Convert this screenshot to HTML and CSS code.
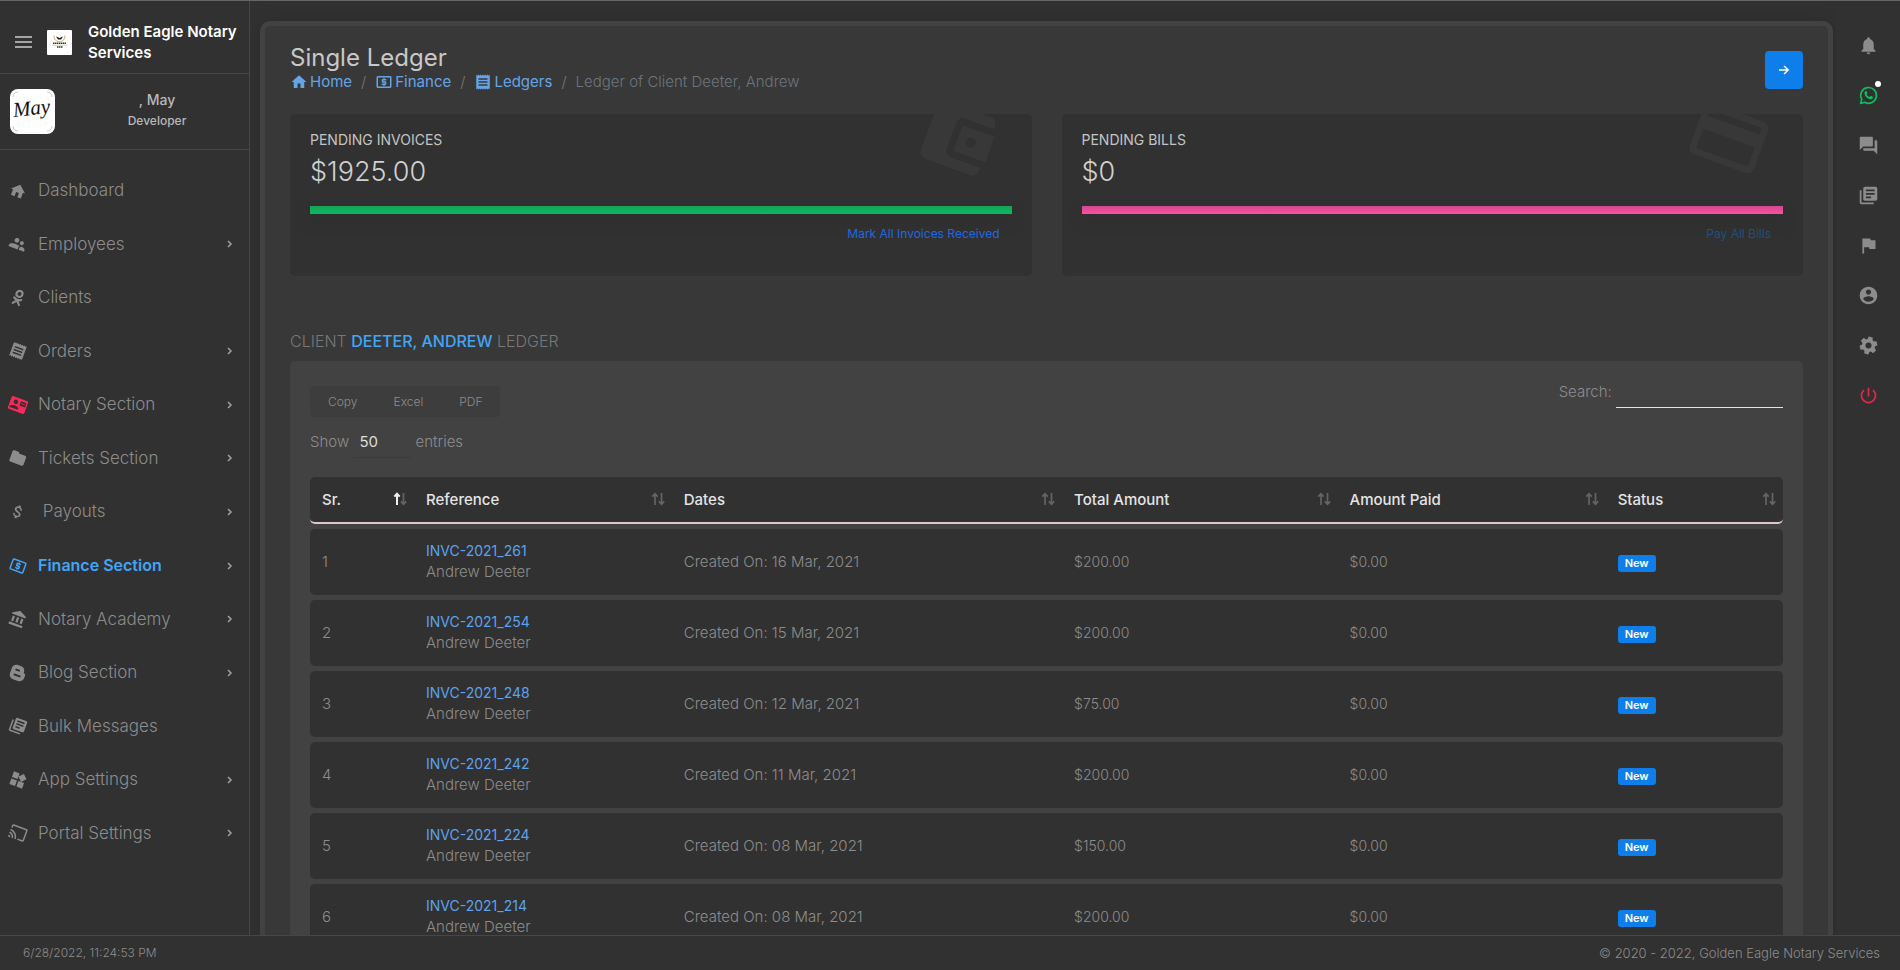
FILE: index.html
```html
<!DOCTYPE html>
<html lang="en">
<head>
<meta charset="utf-8">
<title>Single Ledger</title>
<meta name="viewport" content="width=device-width, initial-scale=1">
<link rel="stylesheet" href="styles.css">
</head>
<body>
<svg class="sprite" aria-hidden="true">
  <symbol id="i-home" viewBox="0 0 24 24"><path d="M10 20v-6h4v6h5v-8h3L12 3 2 12h3v8z"/></symbol>
  <symbol id="i-people" viewBox="0 0 24 24"><path d="M16.500 12c1.380 0 2.700-1.120 2.700-2.800S17.880 6.500 16.500 6.500C15.120 6.500 13.800 7.700 13.800 9.200s1.320 2.800 2.700 2.800zM9 11c1.660 0 3.200-1.340 3.200-3.200S10.660 4.600 9 4.600C7.340 4.600 5.800 6 5.800 7.800S7.340 11 9 11zM9 13c-2.500 0-8 1.170-8 3.800V19h13v-2.250c0-1 .2-2 1-3-2-.6-4-.75-6-.75zm8.500 1c-1.300.6-2 1.600-2 2.750V19H23v-2.250c0-1.800-3-2.750-5.500-2.750z"/></symbol>
  <symbol id="i-client" viewBox="0 0 24 24"><g fill="none" stroke="currentColor" stroke-width="2.800" stroke-linecap="round"><circle cx="12" cy="6.200" r="4"/><path d="M7 13c3 2.300 7 2.300 10 0M12 15.500l-4.500 5M12 15.500l4.500 5"/></g></symbol>
  <symbol id="i-receipt" viewBox="0 0 24 24"><path d="M18 17H6v-2h12v2zm0-4H6v-2h12v2zm0-4H6V7h12v2zM3 22l1.5-1.5L6 22l1.5-1.5L9 22l1.5-1.5L12 22l1.5-1.5L15 22l1.5-1.5L18 22l1.5-1.5L21 22V2l-1.5 1.5L18 2l-1.5 1.5L15 2l-1.5 1.5L12 2l-1.5 1.5L9 2 7.5 3.5 6 2 4.5 3.5 3 2v20z"/></symbol>
  <symbol id="i-contact" viewBox="0 0 24 24"><path d="M21 8V7l-3 2-3-2v1l3 2 3-2zm1-5H2C.9 3 0 3.9 0 5v14c0 1.1.9 2 2 2h20c1.1 0 1.99-.9 1.99-2L24 5c0-1.1-.9-2-2-2zM8 6c1.66 0 3 1.34 3 3s-1.34 3-3 3-3-1.34-3-3 1.34-3 3-3zm6 12H2v-1c0-2 4-3.1 6-3.1s6 1.1 6 3.1v1zm8-6h-8V6h8v6z"/></symbol>
  <symbol id="i-folder" viewBox="0 0 24 24"><path d="M10 4H4c-1.1 0-1.99.9-1.99 2L2 18c0 1.1.9 2 2 2h16c1.1 0 2-.9 2-2V8c0-1.1-.9-2-2-2h-8l-2-2z"/></symbol>
  <symbol id="i-money" viewBox="0 0 24 24"><path d="M11.8 10.9c-2.27-.59-3-1.2-3-2.15 0-1.09 1.01-1.85 2.7-1.85 1.78 0 2.44.85 2.5 2.1h2.21c-.07-1.72-1.12-3.3-3.21-3.81V3h-3v2.16c-1.94.42-3.5 1.68-3.5 3.61 0 2.31 1.91 3.46 4.7 4.13 2.5.6 3 1.48 3 2.41 0 .69-.49 1.79-2.7 1.79-2.06 0-2.87-.92-2.98-2.1h-2.2c.12 2.19 1.76 3.42 3.68 3.83V21h3v-2.15c1.95-.37 3.5-1.5 3.5-3.55 0-2.84-2.43-3.81-4.7-4.4z"/></symbol>
  <symbol id="i-atm" viewBox="0 0 24 24"><path d="M11 17h2v-1h1c.55 0 1-.45 1-1v-3c0-.55-.45-1-1-1h-3v-1h4V8h-2V7h-2v1h-1c-.55 0-1 .45-1 1v3c0 .55.45 1 1 1h3v1H9v2h2v1zm9-13H4c-1.11 0-1.99.89-1.99 2L2 18c0 1.11.89 2 2 2h16c1.11 0 2-.89 2-2V6c0-1.11-.89-2-2-2zm0 14H4V6h16v12z"/></symbol>
  <symbol id="i-bank" viewBox="0 0 24 24"><path d="M4 10v7h3v-7H4zm6 0v7h3v-7h-3zM2 22h19v-3H2v3zm14-12v7h3v-7h-3zm-4.500-9L2 6v2h19V6l-9.500-5z"/></symbol>
  <symbol id="i-blog" viewBox="0 0 24 24"><path fill-rule="evenodd" d="M8.500 2H13c3.600 0 6 2.600 6 6 0 1.300.4 1.900 1.500 2 1 .1 1.500.6 1.500 1.500V15c0 4-2.800 7-6.500 7h-7C4.800 22 2 19 2 15.500v-7C2 4.800 4.800 2 8.500 2zM8.300 7.200a1.300 1.300 0 0 0 0 2.600h4a1.300 1.300 0 0 0 0-2.600zM8.300 14.200a1.300 1.300 0 0 0 0 2.600h7.400a1.300 1.300 0 0 0 0-2.600z"/></symbol>
  <symbol id="i-books" viewBox="0 0 24 24"><path d="M4 6H2v14c0 1.100.9 2 2 2h14v-2H4V6zm16-4H8c-1.100 0-2 .9-2 2v12c0 1.100.9 2 2 2h12c1.100 0 2-.9 2-2V4c0-1.100-.9-2-2-2zm-1 9H9V9h10v2zm-4 4H9v-2h6v2zm4-8H9V5h10v2z"/></symbol>
  <symbol id="i-widgets" viewBox="0 0 24 24"><path d="M13 13v8h8v-8h-8zM3 21h8v-8H3v8zM3 3v8h8V3H3zm13.660-1.310L11 7.340 16.660 13l5.660-5.660-5.660-5.650z"/></symbol>
  <symbol id="i-cast" viewBox="0 0 24 24"><path d="M21 3H3c-1.100 0-2 .9-2 2v3h2V5h18v14h-7v2h7c1.100 0 2-.9 2-2V5c0-1.100-.9-2-2-2zM1 18v3h3c0-1.660-1.340-3-3-3zm0-4v2c2.760 0 5 2.240 5 5h2c0-3.870-3.130-7-7-7zm0-4v2c4.970 0 9 4.030 9 9h2c0-6.080-4.930-11-11-11z"/></symbol>
  <symbol id="i-bell" viewBox="0 0 24 24"><path d="M12 22c1.100 0 2-.9 2-2h-4c0 1.100.89 2 2 2zm6-6v-5c0-3.070-1.640-5.640-4.500-6.320V4c0-.83-.67-1.500-1.500-1.500s-1.500.67-1.500 1.500v.68C7.630 5.360 6 7.920 6 11v5l-2 2v1h16v-1l-2-2z"/></symbol>
  <symbol id="i-whatsapp" viewBox="0 0 24 24"><path fill="none" stroke="currentColor" stroke-width="1.900" stroke-linejoin="round" d="M3 21l1.300-4.700A9 9 0 1 1 7.700 19.700z"/><path d="M8.800 6.900c.3-.2.9-.2 1.100.2l.8 1.900c.1.300 0 .6-.2.800l-.7.8c.8 1.500 1.900 2.500 3.500 3.200l.9-1.100c.2-.2.500-.3.800-.2l1.800.9c.3.1.4.4.3.800-.2 1.300-1.300 2.100-2.500 2.100-3.600-.2-7.200-3.900-7.200-6.900 0-1.100.6-2 1.400-2.500z"/></symbol>
  <symbol id="i-chat" viewBox="0 0 24 24"><path d="M21 6h-2v9H6v2c0 .55.45 1 1 1h11l4 4V7c0-.55-.45-1-1-1zm-4 6V3c0-.55-.45-1-1-1H3c-.55 0-1 .45-1 1v14l4-4h10c.55 0 1-.45 1-1z"/></symbol>
  <symbol id="i-flag" viewBox="0 0 24 24"><path d="M14.400 6L14 4H5v17h2v-7h5.600l.4 2h7V6z"/></symbol>
  <symbol id="i-account" viewBox="0 0 24 24"><path d="M12 2C6.480 2 2 6.480 2 12s4.480 10 10 10 10-4.480 10-10S17.520 2 12 2zm0 3c1.660 0 3 1.340 3 3s-1.340 3-3 3-3-1.340-3-3 1.340-3 3-3zm0 14.200c-2.500 0-4.710-1.280-6-3.220.03-1.990 4-3.080 6-3.080 1.990 0 5.970 1.090 6 3.080-1.290 1.940-3.500 3.220-6 3.220z"/></symbol>
  <symbol id="i-gear" viewBox="0 0 24 24"><path transform="rotate(15 12 12)" d="M19.430 12.980c.04-.32.07-.64.07-.98s-.03-.66-.07-.98l2.110-1.650c.19-.15.24-.42.12-.64l-2-3.460c-.12-.22-.39-.3-.61-.22l-2.490 1c-.52-.4-1.080-.73-1.690-.98l-.38-2.650C14.460 2.180 14.250 2 14 2h-4c-.25 0-.46.18-.49.42l-.38 2.650c-.61.25-1.170.59-1.690.98l-2.490-1c-.23-.09-.49 0-.61.22l-2 3.460c-.13.22-.07.49.12.64l2.110 1.650c-.04.32-.07.65-.07.98s.03.66.07.98l-2.110 1.650c-.19.15-.24.42-.12.64l2 3.460c.12.22.39.3.61.22l2.490-1c.52.4 1.080.73 1.690.98l.38 2.650c.03.24.24.42.49.42h4c.25 0 .46-.18.49-.42l.38-2.650c.61-.25 1.170-.59 1.690-.98l2.490 1c.23.09.49 0 .61-.22l2-3.460c.12-.22.07-.49-.12-.64l-2.110-1.650zM12 15.500c-1.930 0-3.500-1.570-3.500-3.500s1.570-3.500 3.500-3.500 3.500 1.570 3.500 3.500-1.570 3.500-3.500 3.500z"/></symbol>
  <symbol id="i-power" viewBox="0 0 24 24"><path d="M13 3h-2v10h2V3zm4.830 2.170l-1.420 1.420C17.990 7.860 19 9.810 19 12c0 3.870-3.130 7-7 7s-7-3.130-7-7c0-2.190 1.010-4.140 2.580-5.420L6.170 5.170C4.230 6.820 3 9.260 3 12c0 4.970 4.030 9 9 9s9-4.030 9-9c0-2.740-1.230-5.180-3.170-6.830z"/></symbol>
  <symbol id="i-wallet" viewBox="0 0 24 24"><path d="M21 18v1c0 1.100-.9 2-2 2H5c-1.110 0-2-.9-2-2V5c0-1.100.89-2 2-2h14c1.100 0 2 .9 2 2v1h-9c-1.110 0-2 .9-2 2v8c0 1.100.89 2 2 2h9zm-9-2h10V8H12v8zm4-2.500c-.83 0-1.500-.67-1.500-1.500s.67-1.500 1.500-1.500 1.500.67 1.500 1.500-.67 1.500-1.500 1.500z"/></symbol>
  <symbol id="i-card" viewBox="0 0 24 24"><path d="M20 4H4c-1.110 0-1.990.89-1.990 2L2 18c0 1.110.89 2 2 2h16c1.110 0 2-.89 2-2V6c0-1.110-.89-2-2-2zm0 14H4v-6h16v6zm0-10H4V6h16v2z"/></symbol>
  <symbol id="i-chevron" viewBox="0 0 8 10"><path fill="none" stroke="currentColor" stroke-width="1.500" d="M2 2l3 3-3 3"/></symbol>
  <symbol id="i-arrow" viewBox="0 0 12 12"><path fill="none" stroke="currentColor" stroke-width="1.500" d="M1 6h9M6 2l4.200 4L6 10"/></symbol>
  <symbol id="i-sort" viewBox="0 0 14 14"><g fill="none" stroke="currentColor" stroke-width="1.700"><path d="M4 13V2M1.300 4.600L4 1.800l2.700 2.800M10.500 1v11M7.800 9.400l2.700 2.800 2.700-2.800"/></g></symbol>
  <symbol id="i-sort-asc" viewBox="0 0 14 14"><g fill="none" stroke="currentColor" stroke-width="1.700"><path stroke="#f0f0f0" stroke-width="2" d="M4 13V2M1.300 4.600L4 1.800l2.700 2.800"/><path d="M10.500 1v11M7.800 9.400l2.700 2.800 2.700-2.800"/></g></symbol>
</svg>

<div class="app">
  <aside class="sidebar">
    <div class="brand">
      <button class="menu-toggle" type="button" aria-label="Toggle menu"><span></span><span></span><span></span></button>
      <svg class="brand-logo" viewBox="0 0 25 25" aria-hidden="true">
        <rect width="25" height="25" rx="1" fill="#fff"/>
        <path d="M7 5.500c0 4 2 6 5.500 6s5.500-2 5.500-6" fill="none" stroke="#c9ad6a" stroke-width="1"/>
        <path d="M9 6.500l2.500 1 1 .8 1-.8 2.500-1-2 3h-3z" fill="#161616"/>
        <path d="M6 13.200h13M10 17h5.500" stroke="#333" stroke-width="1.600" stroke-dasharray="1.500 .5"/>
        <path d="M5 15.200h15" stroke="#c9ad6a" stroke-width=".6"/>
      </svg>
      <a class="brand-name" href="#">Golden Eagle Notary Services</a>
    </div>
    <div class="profile">
      <svg class="avatar" viewBox="0 0 45 45" role="img" aria-label="May">
        <rect width="45" height="45" rx="8" fill="#fff"/>
        <path d="M3 8c0-3 2-5 5-5M37 3c3 0 5 2 5 5M3 37c0 3 2 5 5 5M37 42c3 0 5-2 5-5" fill="none" stroke="#aaa" stroke-width=".6"/>
        <text class="avatar-text" x="22" y="26" text-anchor="middle" transform="rotate(-6 22 24)">May</text>
      </svg>
      <div class="profile-info">
        <div class="profile-name">, May</div>
        <div class="profile-role">Developer</div>
      </div>
    </div>
    <nav class="nav">
      <a href="#"><svg class="nav-icon"><use href="#i-home"/></svg><span>Dashboard</span></a>
      <a href="#"><svg class="nav-icon"><use href="#i-people"/></svg><span>Employees</span><svg class="chev"><use href="#i-chevron"/></svg></a>
      <a href="#"><svg class="nav-icon"><use href="#i-client"/></svg><span>Clients</span></a>
      <a href="#"><svg class="nav-icon"><use href="#i-receipt"/></svg><span>Orders</span><svg class="chev"><use href="#i-chevron"/></svg></a>
      <a href="#"><svg class="nav-icon red"><use href="#i-contact"/></svg><span>Notary Section</span><svg class="chev"><use href="#i-chevron"/></svg></a>
      <a href="#"><svg class="nav-icon"><use href="#i-folder"/></svg><span>Tickets Section</span><svg class="chev"><use href="#i-chevron"/></svg></a>
      <a href="#"><svg class="nav-icon"><use href="#i-money"/></svg><span>&nbsp;Payouts</span><svg class="chev"><use href="#i-chevron"/></svg></a>
      <a href="#" class="active"><svg class="nav-icon"><use href="#i-atm"/></svg><span>Finance Section</span><svg class="chev"><use href="#i-chevron"/></svg></a>
      <a href="#"><svg class="nav-icon"><use href="#i-bank"/></svg><span>Notary Academy</span><svg class="chev"><use href="#i-chevron"/></svg></a>
      <a href="#"><svg class="nav-icon"><use href="#i-blog"/></svg><span>Blog Section</span><svg class="chev"><use href="#i-chevron"/></svg></a>
      <a href="#"><svg class="nav-icon"><use href="#i-books"/></svg><span>Bulk Messages</span></a>
      <a href="#"><svg class="nav-icon"><use href="#i-widgets"/></svg><span>App Settings</span><svg class="chev"><use href="#i-chevron"/></svg></a>
      <a href="#"><svg class="nav-icon"><use href="#i-cast"/></svg><span>Portal Settings</span><svg class="chev"><use href="#i-chevron"/></svg></a>
    </nav>
  </aside>

  <main class="main">
    <div class="content">
      <header class="page-head">
        <div>
          <h1>Single Ledger</h1>
          <nav class="crumbs" aria-label="Breadcrumb">
            <a href="#"><svg><use href="#i-home"/></svg>Home</a><span class="sep">/</span>
            <a href="#"><svg><use href="#i-atm"/></svg>Finance</a><span class="sep">/</span>
            <a href="#"><svg><use href="#i-receipt"/></svg>Ledgers</a><span class="sep">/</span>
            <span class="current">Ledger of Client Deeter, Andrew</span>
          </nav>
        </div>
        <button class="next" type="button" aria-label="Next"><svg><use href="#i-arrow"/></svg></button>
      </header>

      <section class="stats">
        <article class="stat">
          <svg class="watermark" aria-hidden="true"><use href="#i-wallet"/></svg>
          <h2>PENDING INVOICES</h2>
          <div class="value">$1925.00</div>
          <div class="bar green"></div>
          <a class="action" href="#">Mark All Invoices Received</a>
        </article>
        <article class="stat">
          <svg class="watermark" aria-hidden="true"><use href="#i-card"/></svg>
          <h2>PENDING BILLS</h2>
          <div class="value">$0</div>
          <div class="bar pink"></div>
          <a class="action muted" href="#">Pay All Bills</a>
        </article>
      </section>

      <h2 class="section-title">CLIENT <strong>DEETER, ANDREW</strong> LEDGER</h2>

      <section class="panel">
        <div class="tools">
          <div class="tools-left">
            <div class="exports"><button type="button">Copy</button><button type="button">Excel</button><button type="button">PDF</button></div>
            <label class="length">Show <select><option>50</option></select> entries</label>
          </div>
          <label class="search">Search: <input type="search"></label>
        </div>
        <table class="ledger">
          <colgroup><col class="c-sr"><col class="c-ref"><col class="c-date"><col class="c-total"><col class="c-paid"><col class="c-status"></colgroup>
          <thead>
            <tr>
              <th scope="col"><div>Sr.<svg><use href="#i-sort-asc"/></svg></div></th>
              <th scope="col"><div>Reference<svg><use href="#i-sort"/></svg></div></th>
              <th scope="col"><div>Dates<svg><use href="#i-sort"/></svg></div></th>
              <th scope="col"><div>Total Amount<svg><use href="#i-sort"/></svg></div></th>
              <th scope="col"><div>Amount Paid<svg><use href="#i-sort"/></svg></div></th>
              <th scope="col"><div>Status<svg><use href="#i-sort"/></svg></div></th>
            </tr>
          </thead>
          <tbody>
            <tr><td>1</td><td><a href="#">INVC-2021_261</a><br>Andrew Deeter</td><td>Created On: 16 Mar, 2021</td><td class="amount">$200.00</td><td class="amount">$0.00</td><td><span class="badge">New</span></td></tr>
            <tr><td>2</td><td><a href="#">INVC-2021_254</a><br>Andrew Deeter</td><td>Created On: 15 Mar, 2021</td><td class="amount">$200.00</td><td class="amount">$0.00</td><td><span class="badge">New</span></td></tr>
            <tr><td>3</td><td><a href="#">INVC-2021_248</a><br>Andrew Deeter</td><td>Created On: 12 Mar, 2021</td><td class="amount">$75.00</td><td class="amount">$0.00</td><td><span class="badge">New</span></td></tr>
            <tr><td>4</td><td><a href="#">INVC-2021_242</a><br>Andrew Deeter</td><td>Created On: 11 Mar, 2021</td><td class="amount">$200.00</td><td class="amount">$0.00</td><td><span class="badge">New</span></td></tr>
            <tr><td>5</td><td><a href="#">INVC-2021_224</a><br>Andrew Deeter</td><td>Created On: 08 Mar, 2021</td><td class="amount">$150.00</td><td class="amount">$0.00</td><td><span class="badge">New</span></td></tr>
            <tr><td>6</td><td><a href="#">INVC-2021_214</a><br>Andrew Deeter</td><td>Created On: 08 Mar, 2021</td><td class="amount">$200.00</td><td class="amount">$0.00</td><td><span class="badge">New</span></td></tr>
          </tbody>
        </table>
      </section>
    </div>
  </main>

  <aside class="rail">
    <a href="#" aria-label="Notifications"><svg><use href="#i-bell"/></svg></a>
    <a href="#" aria-label="WhatsApp" class="green-icon"><svg><use href="#i-whatsapp"/></svg><span class="dot"></span></a>
    <a href="#" aria-label="Chat"><svg><use href="#i-chat"/></svg></a>
    <a href="#" aria-label="Library"><svg><use href="#i-books"/></svg></a>
    <a href="#" aria-label="Flags"><svg><use href="#i-flag"/></svg></a>
    <a href="#" aria-label="Account"><svg><use href="#i-account"/></svg></a>
    <a href="#" aria-label="Settings"><svg><use href="#i-gear"/></svg></a>
    <a href="#" aria-label="Log out" class="red"><svg><use href="#i-power"/></svg></a>
  </aside>

  <footer class="footer"><span class="clock">6/28/2022, 11:24:53 PM</span><span>© 2020 - 2022, Golden Eagle Notary Services</span></footer>
</div>
</body>
</html>
```
FILE: styles.css
```css
* { box-sizing: border-box; }

body {
  margin: 0;
  background: #313131;
  color: #8c8c8c;
  font: 300 15px/21px Inter, "Liberation Sans", sans-serif;
}

a { color: inherit; text-decoration: none; }
button, input, select { font: inherit; color: inherit; border: 0; background: none; padding: 0; margin: 0; }
h1, h2 { margin: 0; }
svg { fill: currentColor; flex: none; }
.sprite { display: none; }
.red { color: #f6295a; }

.app {
  display: grid;
  grid-template: minmax(0, 1fr) auto / 250px minmax(0, 1fr) 64px;
  height: 100vh;
  border-top: 1px solid #666;
}

.sidebar { display: flex; flex-direction: column; border-right: 1px solid #464646; min-height: 0; }

.brand { display: flex; align-items: center; height: 73px; padding: 10px 0 0 15px; border-bottom: 1px solid #464646; }
.menu-toggle { flex: none; display: grid; gap: 3px; width: 17px; }
.menu-toggle span { height: 2px; background: #a5a5a5; }
.brand-logo { width: 25px; height: 25px; margin: 0 16px 0 15px; }
.brand-name { color: #fff; font-weight: 600; }

.profile { display: flex; height: 76px; padding: 15px 26px 0 10px; border-bottom: 1px solid #464646; color: #b8b8b8; }
.avatar { width: 45px; height: 45px; }
.avatar-text { font: italic 21px "Liberation Serif", serif; fill: #111; }
.profile-info { flex: 1; padding-left: 36px; text-align: center; }
.profile-name { font-size: 14px; font-weight: 500; }
.profile-role { font-size: 12px; font-weight: 500; }

.nav { flex: 1; display: grid; grid-auto-rows: minmax(40px, 1fr); padding: 14px 0 75px; min-height: 0; }
.nav a { display: flex; align-items: center; padding: 0 15px 0 9px; font-size: 17px; }
.nav-icon { width: 18px; height: 18px; margin-right: 11px; transform: rotate(20deg); }
.nav .active { font-size: 16px; font-weight: 600; color: #42a5f5; }
.chev { width: 8px; height: 10px; margin-left: auto; color: #a0a0a0; }

.main { overflow-y: auto; scrollbar-width: none; padding: 20px 3px 20px 10px; }
.content { border: 5px solid #424242; border-radius: 10px; background: #383838; padding: 20px 25px 25px; box-shadow: 0 0 12px #2c2c2c; }

.page-head { display: flex; justify-content: space-between; align-items: center; }
.page-head h1 { font-size: 24px; line-height: 24px; font-weight: 400; color: #c8c8c8; }
.crumbs { display: flex; align-items: center; line-height: 24px; }
.crumbs a { display: flex; align-items: center; gap: 2px; color: #64a5e8; font-weight: 400; }
.crumbs svg { width: 18px; height: 18px; }
.sep { padding: 0 9px; color: #777; }
.current { color: #6c757d; }
.next { display: grid; place-items: center; width: 38px; height: 38px; border-radius: 4px; background: #0d7eea; color: #fff; }
.next svg { width: 12px; height: 12px; }

.stats { display: grid; grid-template-columns: 1fr 1fr; gap: 30px; margin-top: 20px; }
.stat { position: relative; overflow: hidden; padding: 16px 20px 32px; border-radius: 5px; background: #313131; }
.stat h2 { font-size: 14px; line-height: 20px; font-weight: 400; color: #c4c4c4; }
.value { font-size: 27px; line-height: 44px; color: #d0d0d0; }
.bar { height: 8px; margin: 12px 0 10px; }
.green { background: linear-gradient(#17a05a, #08bd5e); box-shadow: 0 8px 12px #2e2e2e; }
.pink { background: linear-gradient(#cf4a8c, #fd4fa4); box-shadow: 0 8px 12px #2e2e2e; }
.action { display: block; width: fit-content; margin: 0 12px 0 auto; font-size: 12px; line-height: 20px; font-weight: 400; color: #1f69e0; }
.action.muted { color: #214f80; }
.watermark { position: absolute; top: -17px; right: 33px; width: 82px; height: 82px; color: #383838; transform: rotate(20deg); }

.section-title { margin: 55px 0 10px; font-size: 16px; line-height: 20px; font-weight: 300; color: #777; }
.section-title strong { color: #42a5f5; font-weight: 500; }

.panel { padding: 15px 20px 20px; border-radius: 5px; background: #424242; }
.tools { display: flex; justify-content: space-between; align-items: flex-start; margin-bottom: 14px; }
.tools-left { display: grid; gap: 10px; padding-top: 10px; justify-items: start; }
.exports { display: flex; border-radius: 4px; background: #3d3d3d; }
.exports button { height: 31px; padding: 0 18px; font-size: 12px; }
.length select { appearance: none; width: 58px; height: 31px; padding: 0 0 2px 6px; border-bottom: 1px solid #3c3c3c; color: #ddd; font-weight: 400; }
.search input { width: 167px; height: 32px; border-bottom: 1px solid #e4e4e4; outline: 0; }

.ledger { width: 100%; table-layout: fixed; border-spacing: 0 5px; }
.c-sr { width: 104px; }
.c-ref { width: 17.5%; }
.c-date { width: 26.5%; }
.c-total { width: 18.7%; }
.c-paid { width: 18.2%; }
.ledger th, .ledger td { background: #313131; text-align: left; }
.ledger th { height: 47px; padding: 0 7px 1px 12px; border-bottom: 2px solid #dcc8cc; color: #e4e4e4; font-weight: 500; }
.ledger th div { display: flex; justify-content: space-between; align-items: center; }
.ledger th svg { width: 14px; height: 14px; color: #646464; }
.ledger td { height: 66px; padding: 0 12px 2px; }
.ledger td.amount, .ledger td a { font-size: 14px; }
.ledger td a { color: #5ca2ee; font-weight: 400; }
.ledger tr > :first-child { border-radius: 5px 0 0 5px; }
.ledger tr > :last-child { border-radius: 0 5px 5px 0; }
.badge { display: inline-block; padding: 0 7px; border-radius: 3px; background: #0d7eea; color: #fff; font-size: 11px; line-height: 17px; font-weight: 600; }

.rail { display: flex; flex-direction: column; padding-top: 19px; }
.rail a { position: relative; display: grid; place-items: center; height: 50px; color: #8c8c8c; }
.rail .green-icon { color: #0fbd5c; }
.rail .red { color: #e0284f; }
.rail svg { width: 21px; height: 21px; }
.dot { position: absolute; top: 11px; right: 19px; width: 6px; height: 6px; border-radius: 50%; background: #fff; }

.footer { grid-column: 1 / -1; display: flex; justify-content: space-between; padding: 7px 20px 7px 23px; border-top: 1px solid #464646; background: #313131; font-size: 13px; line-height: 20px; }
.clock { font-size: 12px; }
```
